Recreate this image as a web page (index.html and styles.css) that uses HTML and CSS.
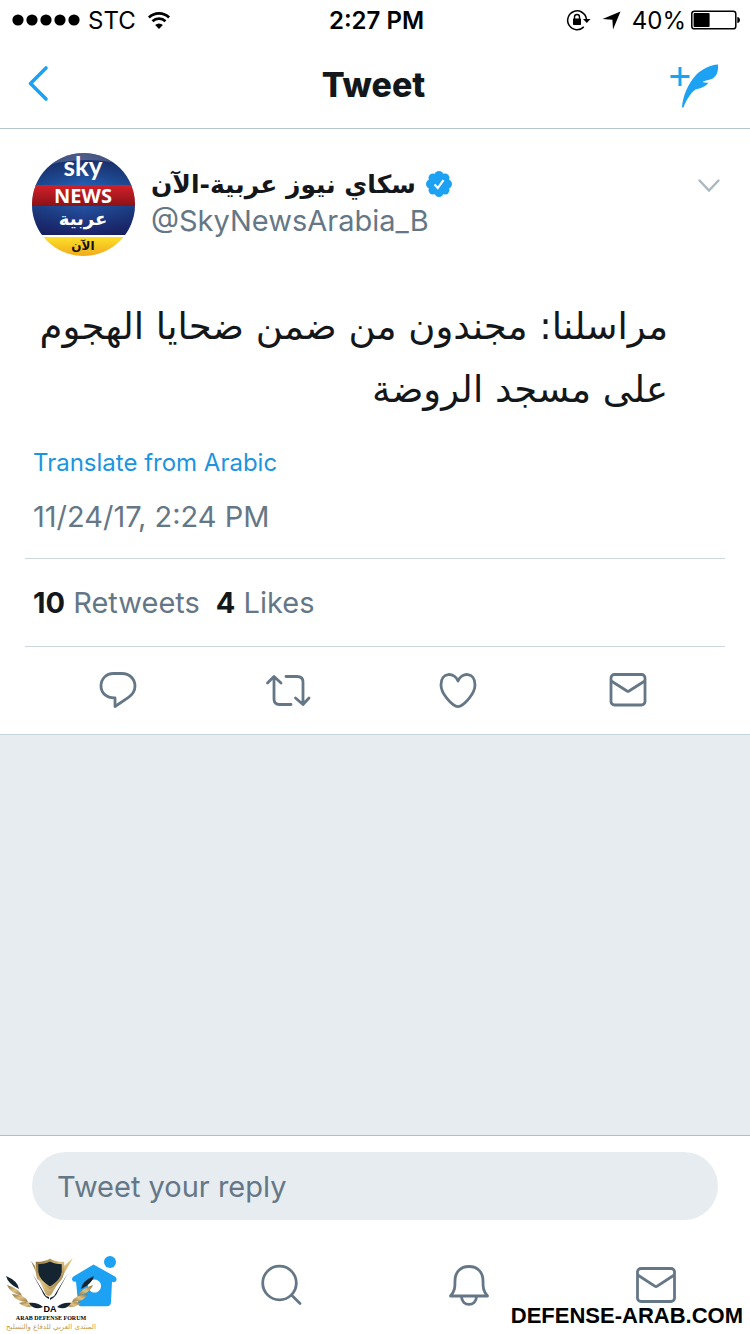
FILE: index.html
```html
<!DOCTYPE html>
<html lang="en">
<head>
    <meta charset="UTF-8">
    <meta name="viewport" content="width=device-width, initial-scale=1.0">
    <title>Tweet</title>
    <link rel="stylesheet" href="styles.css">
</head>
<body>
    <div class="status-bar">
        <div class="status-left">
            <svg width="68" height="12" viewBox="0 0 68 12"><circle cx="6" cy="6" r="5.6"/><circle cx="20" cy="6" r="5.6"/><circle cx="34" cy="6" r="5.6"/><circle cx="48" cy="6" r="5.6"/><circle cx="62" cy="6" r="5.6"/></svg>
            <span>STC</span>
            <svg width="24" height="18" viewBox="0 0 26 20" fill="none" stroke="#000" stroke-width="3"><path d="M1.800 7.200a16 16 0 0 1 22.400 0"/><path d="M5.800 11.400a10.200 10.200 0 0 1 14.400 0"/><path d="M13 20l-4.300-4.400a6.100 6.100 0 0 1 8.600 0z" fill="#000" stroke="none"/></svg>
        </div>
        <span class="clock">2:27 PM</span>
        <div class="status-right">
            <svg width="24" height="22" viewBox="0 0 24 22"><path d="M16.800 17.900A9.400 9.400 0 1 1 19.400 10" fill="none" stroke="#000" stroke-width="1.500"/><path d="M16 10h7.500l-3.700 4z"/><rect x="6" y="9.600" width="8" height="6.400" rx=".7"/><path d="M7.500 10V8a2.500 2.500 0 0 1 5 0v2" fill="none" stroke="#000" stroke-width="1.400"/></svg>
            <svg width="19" height="19" viewBox="0 0 19 19"><path d="M18.500.5L11 18.500l-.6-9.700L.5 8.100z"/></svg>
            <span>40%</span>
            <svg width="50" height="20" viewBox="0 0 50 20"><rect x=".8" y="1.200" width="44" height="17.600" rx="2.600" fill="none" stroke="#000" stroke-width="1.500"/><rect x="2.600" y="3" width="16" height="14" rx="1"/><path d="M46.300 7c3.600.3 3.600 5.700 0 6z"/></svg>
        </div>
    </div>

    <header class="nav">
        <button class="icon-btn" aria-label="Back">
            <svg width="20" height="36" viewBox="0 0 20 36" fill="none" stroke="#1da1f2" stroke-width="3.600" stroke-linecap="round" stroke-linejoin="round"><path d="M18 2L2.500 17.500 18 33"/></svg>
        </button>
        <h1>Tweet</h1>
        <button class="icon-btn compose" aria-label="Compose">
            <svg width="49" height="44" viewBox="0 0 49 44"><path d="M10 3v19M.5 12.500h19" fill="none" stroke="#1da1f2" stroke-width="3"/><path d="M12 43.500C12.500 33 18 19.500 26 11 32 5 40 1 48 .5c.4 5-.4 10-4 13-3 2.700-8 2.400-11.500 4.500 2 .8 4 .8 6 .5-3.500 5-8 5.500-13 7C20.500 29 16 36.500 13.500 43.500z" fill="#1da1f2"/></svg>
        </button>
    </header>

    <main>
        <article class="tweet">
            <div class="author">
                <svg class="avatar" width="103" height="103" viewBox="0 0 103 103">
                    <defs>
                        <clipPath id="round"><circle cx="51.500" cy="51.500" r="51.500"/></clipPath>
                        <linearGradient id="top" x2="0" y2="1"><stop stop-color="#17265c"/><stop offset="1" stop-color="#2460b4"/></linearGradient>
                        <linearGradient id="red" x2="0" y2="1"><stop stop-color="#d3202a"/><stop offset="1" stop-color="#8a1216"/></linearGradient>
                        <linearGradient id="mid" x2="0" y2="1"><stop stop-color="#2453a4"/><stop offset="1" stop-color="#1b2268"/></linearGradient>
                        <linearGradient id="gold" x2="0" y2="1"><stop stop-color="#fce029"/><stop offset="1" stop-color="#f0aa1c"/></linearGradient>
                        <linearGradient id="glow"><stop stop-color="#0c1442" stop-opacity=".35"/><stop offset=".5" stop-color="#0c1442" stop-opacity="0"/><stop offset="1" stop-color="#0c1442" stop-opacity=".35"/></linearGradient>
                    </defs>
                    <g clip-path="url(#round)">
                        <rect width="103" height="33" fill="url(#top)"/>
                        <path d="M0 0h103v15Q51-2 0 17z" fill="#8d98b8" opacity=".45"/>
                        <rect y="53" width="103" height="29" fill="url(#mid)"/>
                        <rect width="103" height="82" fill="url(#glow)"/>
                        <rect y="32" width="103" height="21" fill="url(#red)"/>
                        <rect y="82" width="103" height="2" fill="#fff"/>
                        <rect y="84" width="103" height="19" fill="url(#gold)"/>
                    </g>
                    <g text-anchor="middle" fill="#fff">
                        <text class="logo-sky" x="51" y="23">sky</text>
                        <text class="logo-news" x="51" y="50">NEWS</text>
                        <text class="logo-arabic" x="51" y="72">عربية</text>
                        <text class="logo-now" x="51" y="97" fill="#111">الآن</text>
                    </g>
                </svg>
                <div class="names">
                    <div class="name-row">
                        <span class="name" dir="rtl" lang="ar">سكاي نيوز عربية-الآن</span>
                        <svg width="26" height="26" viewBox="0 0 26 26" fill="#1da1f2"><circle cx="13" cy="13" r="10"/><circle cx="13" cy="4.500" r="4.500"/><circle cx="19" cy="7" r="4.500"/><circle cx="21.500" cy="13" r="4.500"/><circle cx="19" cy="19" r="4.500"/><circle cx="13" cy="21.500" r="4.500"/><circle cx="7" cy="19" r="4.500"/><circle cx="4.500" cy="13" r="4.500"/><circle cx="7" cy="7" r="4.500"/><path d="M8.500 13.500l3.300 3.600 5.700-8" fill="none" stroke="#fff" stroke-width="2.200"/></svg>
                    </div>
                    <a class="handle" href="#">@SkyNewsArabia_B</a>
                </div>
                <button class="icon-btn more" aria-label="More">
                    <svg width="22" height="14" viewBox="0 0 22 14" fill="none" stroke="#aab8c2" stroke-width="2.400" stroke-linecap="round"><path d="M1.500 1.500L11 11.500l9.500-10"/></svg>
                </button>
            </div>

            <p class="text" dir="rtl" lang="ar">مراسلنا: مجندون من ضمن ضحايا الهجوم على مسجد الروضة</p>
            <a class="translate" href="#">Translate from Arabic</a>
            <time class="date">11/24/17, 2:24 PM</time>

            <div class="stats">
                <a href="#"><b>10</b> Retweets</a>
                <a href="#"><b>4</b> Likes</a>
            </div>

            <div class="actions">
                <button class="icon-btn" aria-label="Reply">
                    <svg class="line" width="38" height="38" viewBox="0 0 38 38"><path d="M14.500 2.500h8.500c7.500 0 13 5.500 13 12.500 0 5-2.500 8.500-6.500 11.300L16 35.500v-8.700C7.500 27 2 22 2 15 2 8 7 2.500 14.500 2.500z"/></svg>
                </button>
                <button class="icon-btn" aria-label="Retweet">
                    <svg class="line" width="44" height="38" viewBox="0 0 44 38"><path d="M1.500 12L8 5.500l7 6.500M8 6v22q0 5.500 5.500 5.500H25M20 5.500h11q6 0 6 5.500v22M29.500 27l7.500 6.500 6-6.500"/></svg>
                </button>
                <button class="icon-btn" aria-label="Like">
                    <svg class="line" width="38" height="38" viewBox="0 0 38 38"><path d="M19 10C15.500 1 2 .5 2 14c0 9 10.500 19 14.500 21q2.500 1.200 5 0C25.500 33 36 23 36 14 36 .5 22.500 1 19 10z"/></svg>
                </button>
                <button class="icon-btn" aria-label="Share by message">
                    <svg class="line" width="38" height="38" viewBox="0 0 38 38"><rect x="2" y="3.500" width="34" height="30.500" rx="3.500"/><path d="M3 10.500l15 9.500q1 .6 2 0l15-9.500"/></svg>
                </button>
            </div>
        </article>
    </main>

    <footer>
        <div class="composer">
            <input type="text" placeholder="Tweet your reply" aria-label="Tweet your reply">
        </div>
        <nav class="tabs">
            <a href="#" aria-label="Home">
                <svg width="46" height="60" viewBox="0 0 46 60" fill="#1da1f2"><circle cx="39" cy="7" r="6"/><path fill-rule="evenodd" d="M22.500 9.500L44 21.500q2.500 2 1 4.500-1.500 2-4 .8l-1 20.500q-.3 4-4 4H10q-3 0-3-4L5 26.500q-2.500 1-3.500-1Q0 23.500 2.500 21.500zM23.500 24.500a6.500 6.500 0 1 0 .1 0z"/></svg>
            </a>
            <a href="#" aria-label="Search">
                <svg class="line" width="42" height="42" viewBox="0 0 42 42"><circle cx="19.500" cy="19" r="16.800"/><path d="M31.500 31l8.500 8.500"/></svg>
            </a>
            <a href="#" aria-label="Notifications">
                <svg class="line" width="42" height="42" viewBox="0 0 42 42"><path d="M2.500 32C7 27 7 23 7 17 7 8 12.500 2.500 21 2.500S35 8 35 17c0 6 0 10 4.500 15zM13.500 32.500c0 10.500 15 10.500 15 0"/></svg>
            </a>
            <a href="#" aria-label="Messages">
                <svg class="line" width="42" height="42" viewBox="0 0 42 42"><rect x="2.500" y="4.500" width="37" height="33" rx="3.500"/><path d="M3.500 11.500l16.300 10.700q1.200.8 2.400 0l16.300-10.700"/></svg>
            </a>
        </nav>
    </footer>

    <svg class="forum-mark" width="96" height="76" viewBox="0 0 96 76">
        <defs><linearGradient id="brass" x2="1" y2="1"><stop stop-color="#8b6b35"/><stop offset=".5" stop-color="#dec384"/><stop offset="1" stop-color="#94723a"/></linearGradient></defs>
        <path d="M29 5l4 5 2 13 13 8 12-8 2-13 9-8-8 14-14 23-2 1-3-1z" fill="url(#brass)"/>
        <path d="M30 17l14 23 3 1v2q-5-2-7-8zM66 17L52 40l-4 2v2q6-3 8-9z" fill="#142430"/>
        <path d="M48 4q5 3 13 3v9q-1 9-13 16-12-7-13-16V7q8 0 13-3z" fill="#142430" stroke="url(#brass)" stroke-width="2.500"/>
        <g id="wing">
            <path d="M4 20q12 5 13 13Q6 28 4 20z" fill="#142430"/>
            <path d="M5 29q13 4 15 11Q8 37 5 29z" fill="url(#brass)"/>
            <path d="M10 38q14 1 16 8-12 0-16-8z" fill="url(#brass)"/>
            <path d="M17 47q9-3 17 2-9 5-17-2z" fill="url(#brass)"/>
            <path d="M27 47q8-1 14 4-9 4-14-4z" fill="#142430"/>
        </g>
        <use href="#wing" transform="matrix(-1 0 0 1 96 0)"/>
        <g text-anchor="middle">
            <text class="mark-da" x="48" y="56">DA</text>
            <text class="mark-name" x="49" y="64">ARAB DEFENSE FORUM</text>
            <text class="mark-arabic" x="49" y="73">المنتدى العربي للدفاع والتسليح</text>
        </g>
    </svg>
    <span class="site-mark">DEFENSE-ARAB.COM</span>
</body>
</html>
```
FILE: styles.css
```css
* {
    box-sizing: border-box;
    margin: 0;
    padding: 0;
}

body {
    position: relative;
    display: flex;
    flex-direction: column;
    min-height: 100vh;
    font-family: Inter, "DejaVu Sans", sans-serif;
    font-size: 29px;
    color: #14171a;
    background: #e6ecf0;
}

svg {
    display: block;
    flex: none;
    overflow: visible;
}

a {
    color: inherit;
    text-decoration: none;
}

.icon-btn {
    border: 0;
    background: none;
    cursor: pointer;
}

.line {
    fill: none;
    stroke: #657786;
    stroke-width: 2.8;
    stroke-linecap: round;
    stroke-linejoin: round;
}

/* status bar */
.status-bar {
    display: grid;
    grid-template-columns: 1fr auto 1fr;
    align-items: center;
    height: 40px;
    padding: 0 9px 0 12px;
    background: #fff;
    color: #000;
    font-size: 24px;
}

.status-left,
.status-right {
    display: flex;
    align-items: center;
    gap: 8px;
}

.status-left svg:last-child {
    margin-left: 3px;
}

.status-right {
    justify-content: flex-end;
    gap: 5px;
}

.status-right svg:nth-child(2) {
    margin: 0 6px;
}

.clock {
    font-weight: 600;
}

/* title bar */
.nav {
    display: grid;
    grid-template-columns: 1fr auto 1fr;
    align-items: center;
    height: 89px;
    padding: 0 31px 0 28px;
    background: #fff;
    border-bottom: 1px solid #b5c4ce;
}

.nav h1 {
    font-size: 34px;
    font-weight: 800;
}

.compose {
    justify-self: end;
    padding-top: 3px;
}

main {
    flex: 1;
}

/* tweet */
.tweet {
    padding: 24px 25px 0;
    background: #fff;
    border-bottom: 1px solid #c5d3dc;
}

.author {
    display: flex;
    align-items: flex-start;
    gap: 16px;
    padding: 0 5px 0 7px;
}

.names {
    flex: 1;
    padding-top: 13px;
}

.name-row {
    display: flex;
    align-items: center;
    gap: 10px;
    height: 36px;
}

.name {
    font-family: "DejaVu Sans", sans-serif;
    font-size: 25px;
    font-weight: 700;
    white-space: nowrap;
}

.handle {
    display: block;
    color: #657786;
    line-height: 38px;
}

.more {
    margin-top: 26px;
}

.logo-sky {
    font: 700 26px Lato, sans-serif;
}

.logo-news {
    font: 700 20px "Open Sans", sans-serif;
}

.logo-arabic {
    font: 700 18px "DejaVu Sans", sans-serif;
}

.logo-now {
    font: 700 12px "DejaVu Sans", sans-serif;
}

.text {
    margin-top: 39px;
    padding: 0 57px 0 8px;
    font-family: "DejaVu Sans", sans-serif;
    font-size: 37px;
    line-height: 63px;
}

.translate,
.date {
    display: block;
    padding-left: 8px;
}

.translate {
    margin-top: 24px;
    color: #1b95e0;
    font-size: 24px;
    line-height: 36px;
}

.date {
    padding-top: 16px;
    padding-bottom: 21px;
    color: #657786;
    line-height: 40px;
}

.stats {
    display: flex;
    align-items: center;
    gap: 16px;
    height: 89px;
    padding: 0 8px;
    color: #657786;
    border-top: 1px solid #ccd6dd;
    border-bottom: 1px solid #ccd6dd;
}

.stats b {
    color: #14171a;
    font-weight: 700;
}

.actions {
    display: grid;
    grid-template-columns: repeat(4, 1fr);
    align-items: center;
    justify-items: center;
    height: 87px;
    padding: 0 12px 2px 8px;
}

/* reply box and tabs */
footer {
    background: #fff;
    border-top: 1px solid #aebfcc;
}

.composer {
    padding: 16px 32px;
}

.composer input {
    display: block;
    width: 100%;
    height: 68px;
    padding: 0 25px;
    border: 0;
    border-radius: 34px;
    background: #e6ecf0;
    font: inherit;
}

.composer input::placeholder {
    color: #657786;
    opacity: 1;
}

.tabs {
    display: grid;
    grid-template-columns: repeat(4, 1fr);
    align-items: center;
    justify-items: center;
    height: 98px;
}

/* watermarks over the page */
.forum-mark {
    position: absolute;
    left: 2px;
    bottom: 2px;
}

.mark-da {
    font: 700 9px "Liberation Sans", sans-serif;
}

.mark-name {
    font: 700 6px "Liberation Serif", serif;
}

.mark-arabic {
    font: 7px "DejaVu Sans", sans-serif;
    fill: #c99a44;
}

.site-mark {
    position: absolute;
    right: 7px;
    bottom: 5px;
    color: #000;
    font: 700 22px "Liberation Sans", sans-serif;
}
```
